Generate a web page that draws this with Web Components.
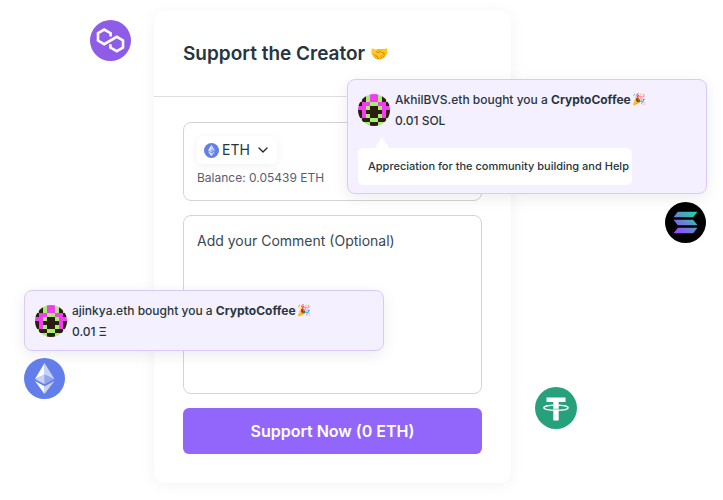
<!DOCTYPE html>
<html lang="en">
<head>
<meta charset="utf-8">
<title>Support the Creator</title>
<style>
  body { margin: 0; background: #fff; color: #263640; font-family: Inter, "Noto Sans", sans-serif; }
</style>
</head>
<body>
<support-page></support-page>
<script>
const COINS = {
  polygon: `<svg viewBox="0 0 41 41"><circle cx="20.500" cy="20.500" r="20.500" fill="#8e5ce6"/><g fill="none" stroke="#fff" stroke-width="2.600" stroke-linejoin="miter"><path d="M20.600 16.600V13.200L14.200 9.600L8 13.200V20.600L14.200 24.200L26.800 16.800L33 20.400V27.600L26.800 31.200L20.400 27.600V24.200"/></g></svg>`,
  solana: `<svg viewBox="0 0 41 41"><defs><linearGradient id="g" gradientUnits="userSpaceOnUse" x1="12" y1="31" x2="30" y2="9"><stop offset="0" stop-color="#9945ff"/><stop offset=".5" stop-color="#5c8fcb"/><stop offset="1" stop-color="#19dba0"/></linearGradient></defs><circle cx="20.500" cy="20.500" r="20.500"/><path fill="url(#g)" d="M12.800 9.800H32.500L28.200 15.300H8.500ZM8.500 17.700H28.200L32.500 23.200H12.800ZM12.800 25.700H32.500L28.200 31.200H8.500Z"/></svg>`,
  ethereum: `<svg viewBox="0 0 41 41"><circle cx="20.500" cy="20.500" r="20.500" fill="#627eea"/><g fill="#fff"><path opacity=".65" d="M20.500 5V16.500L30.500 21Z"/><path d="M20.500 5L11 21L20.500 16.500Z"/><path opacity=".65" d="M20.500 28.200V36L30.500 23Z"/><path d="M20.500 36V28.200L11 23Z"/><path opacity=".3" d="M20.500 26.300L30.500 21L20.500 16.500Z"/><path opacity=".65" d="M11 21L20.500 26.300V16.500Z"/></g></svg>`,
  tether: `<svg viewBox="0 0 42 42"><circle cx="21" cy="21" r="21" fill="#26a17b"/><path fill="#fff" d="M11.500 10.500H30.500V15H23.700V33.500H18.300V15H11.500Z"/><ellipse cx="21" cy="20.800" rx="12.300" ry="2.600" fill="none" stroke="#fff" stroke-width="1.200"/><path fill="#26a17b" d="M18.300 21.600H23.700V22.700H18.300Z" opacity=".5"/></svg>`
};

class CoinIcon extends HTMLElement {
  connectedCallback() {
    this.attachShadow({ mode: "open" }).innerHTML = `
      <style>
        :host { display: block; width: var(--coin-size, 41px); aspect-ratio: 1; flex: none; }
        svg { display: block; width: 100%; height: 100%; }
      </style>${COINS[this.getAttribute("coin")]}`;
  }
}
customElements.define("coin-icon", CoinIcon);

class PixelAvatar extends HTMLElement {
  connectedCallback() {
    const half = ["GDGM", "GDGM", "DMMG", "MMGD", "DMDD", "DMGD", "GDDG", "GGGD"];
    const fill = { G: "#a5ee72", D: "#2b1d10", M: "#f23cf2" };
    let cells = "";
    half.forEach((row, y) => {
      const full = row + [...row].reverse().join("");
      [...full].forEach((c, x) => { cells += `<rect x="${x}" y="${y}" width="1" height="1" fill="${fill[c]}"/>`; });
    });
    this.attachShadow({ mode: "open" }).innerHTML = `
      <style>
        :host { display: block; width: 32px; height: 32px; border-radius: 50%; overflow: hidden; flex: none; }
        svg { display: block; width: 100%; height: 100%; }
      </style>
      <svg viewBox="0 0 8 8" shape-rendering="crispEdges">${cells}</svg>`;
  }
}
customElements.define("pixel-avatar", PixelAvatar);

class CoffeeToast extends HTMLElement {
  connectedCallback() {
    this.attachShadow({ mode: "open" }).innerHTML = `
      <style>
        :host { display: block; box-sizing: border-box; padding: 9px 10px 8px; background: #f5f0ff;
          border: 1px solid #d8cbfa; border-radius: 8px; box-shadow: 0 4px 16px rgba(0,0,0,.08);
          font-size: 12px; font-weight: 500; line-height: 21px; }
        .row { display: flex; align-items: center; gap: 5px; }
        p { margin: 0; white-space: nowrap; }
        b { font-weight: 700; }
        .emoji { font-size: 11px; line-height: 16px; margin-left: 1px; vertical-align: 1px; }
        ::slotted([slot="message"]) { display: block; }
      </style>
      <div class="row">
        <pixel-avatar></pixel-avatar>
        <div>
          <p><slot name="name"></slot> bought you a <b>CryptoCoffee</b><span class="emoji">🎉</span></p>
          <p><slot name="amount"></slot></p>
        </div>
      </div>
      <slot name="message"></slot>`;
  }
}
customElements.define("coffee-toast", CoffeeToast);

class SpeechBubble extends HTMLElement {
  connectedCallback() {
    this.attachShadow({ mode: "open" }).innerHTML = `
      <style>
        :host { font-size: 11px; line-height: 17px; }
        .tail { display: block; margin: 6px 0 0 17px; width: 14px; height: 11px; fill: #fff; }
        .bubble { width: fit-content; padding: 10px 3px 10px 10px; background: #fff; border-radius: 5px; white-space: nowrap; }
      </style>
      <svg class="tail" viewBox="0 0 14 11"><path d="M7 0L14 11H0Z"/></svg>
      <div class="bubble"><slot></slot></div>`;
  }
}
customElements.define("speech-bubble", SpeechBubble);

class TokenSelect extends HTMLElement {
  connectedCallback() {
    this.attachShadow({ mode: "open" }).innerHTML = `
      <style>
        :host { display: inline-flex; }
        label { display: flex; align-items: center; gap: 3px; height: 28px; padding: 0 9px 0 7px;
          border-radius: 5px; background: #fff; box-shadow: 0 2px 10px rgba(0,0,0,.06); --coin-size: 15px; }
        select { appearance: none; border: 0; margin: 0; padding: 0; width: 33px; background: none; color: inherit;
          font: 400 14px/20px Inter, "Noto Sans", sans-serif; }
        svg { width: 10px; height: 6px; fill: none; stroke: #222; stroke-width: 1.3; stroke-linecap: round; stroke-linejoin: round; }
      </style>
      <label>
        <coin-icon coin="ethereum"></coin-icon>
        <select aria-label="Token"><option>ETH</option></select>
        <svg viewBox="0 0 10 6"><path d="M1 1L5 5L9 1"/></svg>
      </label>`;
  }
}
customElements.define("token-select", TokenSelect);

class SupportCard extends HTMLElement {
  connectedCallback() {
    this.attachShadow({ mode: "open" }).innerHTML = `
      <style>
        :host { display: block; background: #fff; border-radius: 11px; box-shadow: 0 2px 16px rgba(0,0,0,.05); }
        header { padding: 29px 29px 28px; border-bottom: 1px solid #dedede; }
        h1 { margin: 0; font-size: 19px; font-weight: 600; line-height: 28px; white-space: nowrap; }
        h1 span { font-size: 15px; line-height: 20px; vertical-align: 1px; }
        form { display: flex; flex-direction: column; gap: 14px; padding: 25px 29px 29px; }
        .amount { display: flex; flex-direction: column; align-items: flex-start; gap: 3px;
          padding: 13px 13px 11px; border: 1px solid #d4d4d4; border-radius: 8px; }
        .balance { font-size: 12px; line-height: 22px; color: #5d5b70; }
        textarea { display: block; box-sizing: border-box; width: 100%; height: 179px; padding: 15px 13px; resize: none;
          border: 1px solid #d4d4d4; border-radius: 8px; background: #fff; color: inherit;
          font: 400 14px/20px Inter, "Noto Sans", sans-serif; }
        textarea::placeholder { color: #3a474f; opacity: 1; }
        button { padding: 11px; border: 0; border-radius: 6px; background: #9366fb; color: #fff;
          font: 600 16px/24px Inter, "Noto Sans", sans-serif; }
      </style>
      <header><h1>Support the Creator <span>🤝</span></h1></header>
      <form>
        <div class="amount">
          <token-select></token-select>
          <div class="balance">Balance: 0.05439 ETH</div>
        </div>
        <textarea aria-label="Comment" placeholder="Add your Comment (Optional)"></textarea>
        <button type="button">Support Now (0 ETH)</button>
      </form>`;
  }
}
customElements.define("support-card", SupportCard);

class SupportPage extends HTMLElement {
  connectedCallback() {
    this.attachShadow({ mode: "open" }).innerHTML = `
      <style>
        :host { display: block; position: relative; padding: 11px 212px 17px 154px; }
        coin-icon, coffee-toast { position: absolute; }
        coffee-toast { width: 360px; }
        .polygon { left: 90px; top: 20px; }
        .solana { right: 17px; top: 202px; }
        .ethereum { left: 24px; top: 358px; }
        .tether { right: 146px; top: 387px; --coin-size: 42px; }
        .first { right: 16px; top: 79px; }
        .second { left: 24px; top: 290px; }
      </style>
      <support-card></support-card>
      <coffee-toast class="first">
        <span slot="name">AkhilBVS.eth</span><span slot="amount">0.01 SOL</span>
        <speech-bubble slot="message">Appreciation for the community building and Help</speech-bubble>
      </coffee-toast>
      <coffee-toast class="second">
        <span slot="name">ajinkya.eth</span><span slot="amount">0.01 Ξ</span>
      </coffee-toast>
      <coin-icon class="polygon" coin="polygon"></coin-icon>
      <coin-icon class="solana" coin="solana"></coin-icon>
      <coin-icon class="ethereum" coin="ethereum"></coin-icon>
      <coin-icon class="tether" coin="tether"></coin-icon>`;
  }
}
customElements.define("support-page", SupportPage);
</script>
</body>
</html>
